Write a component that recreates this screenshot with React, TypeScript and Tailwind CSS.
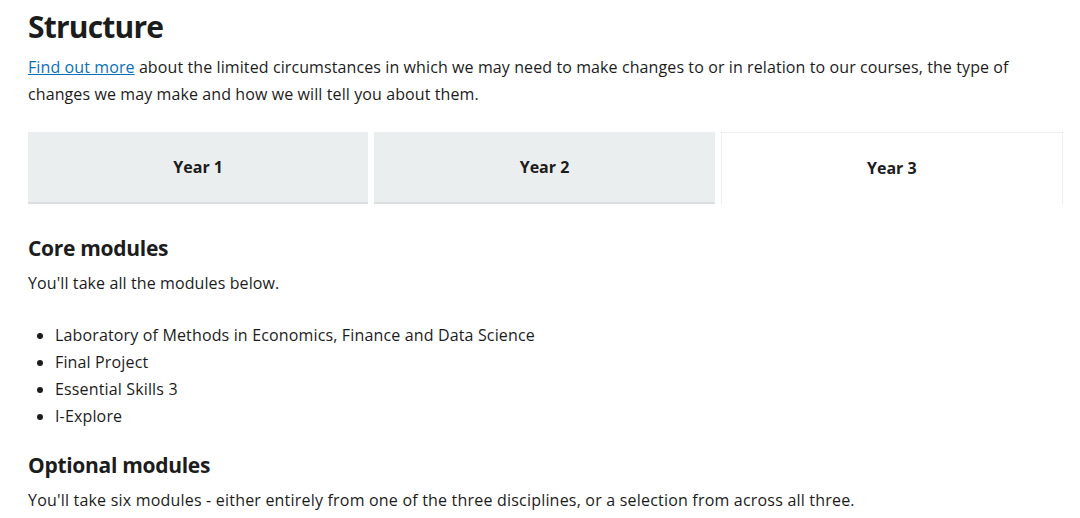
export default function App() {
  return (
    <div className="bg-white text-[#1c1c1c] px-[28px] pt-[7px] w-[1080px] h-[518px] overflow-hidden font-['Open_Sans',_sans-serif]">
      <h2 className="text-[30px] leading-[40px] font-bold tracking-[-0.8px]">Structure</h2>
      <p className="mt-[7px] text-[16px] leading-[27px] tracking-[0.1px]">
        <a href="#" className="text-[#0a70b8] underline">Find out more</a> about the limited circumstances in which we may need to make changes to or in relation to our courses, the type of changes we may make and how we will tell you about them.
      </p>
      <div className="mt-[24px] flex gap-[6px] w-[1035px]">
        <div className="flex-1 h-[72px] bg-[#ebeeee] border-b-2 border-[#dcdfdf] flex items-center justify-center font-bold text-[16px]">Year 1</div>
        <div className="flex-1 h-[72px] bg-[#ebeeee] border-b-2 border-[#dcdfdf] flex items-center justify-center font-bold text-[16px]">Year 2</div>
        <div className="flex-1 h-[72px] bg-white border border-b-0 border-[#eeeeee] pb-[2px] flex items-center justify-center font-bold text-[16px]">Year 3</div>
      </div>
      <h3 className="mt-[29px] text-[21px] leading-[30px] font-bold tracking-[-0.3px]">Core modules</h3>
      <p className="mt-[7px] text-[16px] leading-[27px] tracking-[0.1px]">You'll take all the modules below.</p>
      <ul className="mt-[25px] list-disc pl-[27px] text-[16px] leading-[27px] tracking-[0.15px]">
        <li>Laboratory of Methods in Economics, Finance and Data Science</li>
        <li>Final Project</li>
        <li>Essential Skills 3</li>
        <li>I-Explore</li>
      </ul>
      <h3 className="mt-[20px] text-[21px] leading-[30px] font-bold tracking-[-0.3px]">Optional modules</h3>
      <p className="mt-[7px] text-[16px] leading-[27px] tracking-[0.2px]">You'll take six modules - either entirely from one of the three disciplines, or a selection from across all three.</p>
    </div>
  );
}
